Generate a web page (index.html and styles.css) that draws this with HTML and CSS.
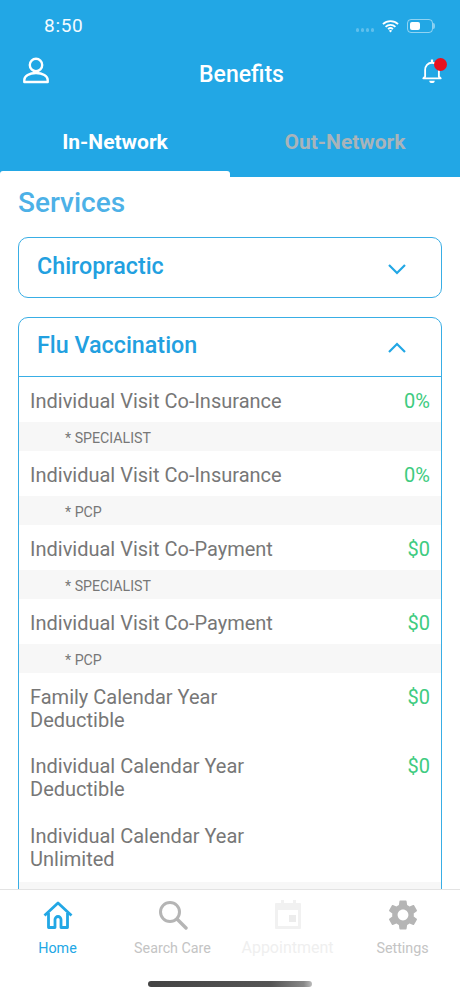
FILE: index.html
```html
<!DOCTYPE html>
<html lang="en">
<head>
<meta charset="utf-8">
<title>Benefits</title>
<link rel="stylesheet" href="styles.css">
</head>
<body>
<div class="app">
  <header class="header">
    <div class="status">
      <span class="time">8:50</span>
      <div class="status-icons">
        <span class="signal"><i></i><i></i><i></i><i></i></span>
        <svg class="wifi" viewBox="0 0 18 14"><path d="M1 5a11.500 11.500 0 0 1 16 0M3.800 7.900a7.500 7.500 0 0 1 10.400 0M6.400 10.400a3.800 3.800 0 0 1 5.200 0" fill="none" stroke="#fff" stroke-width="1.900"/><path d="M9 14l-1.700-2a2.400 2.400 0 0 1 3.400 0z" fill="#fff"/></svg>
        <span class="battery"><span class="battery-fill"></span></span>
      </div>
    </div>
    <div class="nav">
      <svg class="user" viewBox="0 0 28 28"><circle cx="14" cy="8" r="6.200" fill="none" stroke="#fff" stroke-width="2.400"/><path d="M2.300 25v-2c0-4 5-7 11.700-7s11.700 3 11.700 7v2z" fill="none" stroke="#fff" stroke-width="2.400" stroke-linejoin="round"/></svg>
      <h1 class="title">Benefits</h1>
      <span class="bell-wrap">
        <svg class="bell" viewBox="0 0 24 28"><path d="M4.500 20V13c0-4.500 3-8 7.500-8s7.500 3.500 7.500 8v7l2 2H2.500z" fill="none" stroke="#fff" stroke-width="2" stroke-linejoin="round"/><path d="M12 1.500v3" stroke="#fff" stroke-width="2.500"/><path d="M9 24.500a3 2.500 0 0 0 6 0z" fill="#fff"/></svg>
        <span class="badge"></span>
      </span>
    </div>
    <div class="tabs">
      <div class="tab tab-active">In-Network</div>
      <div class="tab tab-muted">Out-Network</div>
    </div>
    <div class="tab-line"></div>
  </header>

  <main class="content">
    <h2 class="services">Services</h2>

    <section class="card card-closed">
      <div class="card-head">
        <span class="card-title">Chiropractic</span>
        <svg class="chev" viewBox="0 0 20 12"><path d="M2 2l8 8 8-8" fill="none" stroke="#22a7e5" stroke-width="2.200"/></svg>
      </div>
    </section>

    <section class="card">
      <div class="card-head card-head-open">
        <span class="card-title">Flu Vaccination</span>
        <svg class="chev" viewBox="0 0 20 12"><path d="M2 10l8-8 8 8" fill="none" stroke="#22a7e5" stroke-width="2.200"/></svg>
      </div>
      <div class="row"><span class="label">Individual Visit Co-Insurance</span><span class="value">0%</span></div>
      <div class="sub">* SPECIALIST</div>
      <div class="row"><span class="label">Individual Visit Co-Insurance</span><span class="value">0%</span></div>
      <div class="sub">* PCP</div>
      <div class="row"><span class="label">Individual Visit Co-Payment</span><span class="value">$0</span></div>
      <div class="sub">* SPECIALIST</div>
      <div class="row"><span class="label">Individual Visit Co-Payment</span><span class="value">$0</span></div>
      <div class="sub">* PCP</div>
      <div class="row row-wrap"><span class="label label-wrap">Family Calendar Year Deductible</span><span class="value">$0</span></div>
      <div class="row row-wrap"><span class="label label-wrap">Individual Calendar Year Deductible</span><span class="value">$0</span></div>
      <div class="row row-wrap"><span class="label label-wrap">Individual Calendar Year Unlimited</span></div>
      <div class="sub"></div>
    </section>
  </main>

  <nav class="tabbar">
    <div class="bar-items">
      <div class="bar-item bar-home">
        <svg class="bar-icon" viewBox="0 0 30 28"><path d="M1.500 14.500L15 2l13.500 12.500M5.500 12v14.500h6.500v-8a3 3 0 0 1 6 0v8h6.500V12" fill="none" stroke="#22a7e5" stroke-width="2.800" stroke-linejoin="round"/></svg>
        <span>Home</span>
      </div>
      <div class="bar-item">
        <svg class="bar-icon" viewBox="0 0 30 30"><circle cx="12" cy="12" r="9.500" fill="none" stroke="#b5b5b5" stroke-width="3"/><path d="M19 19l9 9" stroke="#b5b5b5" stroke-width="3.400" stroke-linecap="round"/></svg>
        <span>Search Care</span>
      </div>
      <div class="bar-item bar-disabled">
        <svg class="bar-icon" viewBox="0 0 30 30"><path d="M3 3h24a1 1 0 0 1 1 1v24a1 1 0 0 1-1 1H3a1 1 0 0 1-1-1V4a1 1 0 0 1 1-1z" fill="#f1f1f1"/><path d="M5 10h20v16H5z" fill="#fff"/><path d="M16 15h7v7h-7z" fill="#ececec"/><path d="M8 0h3v4H8zM20 0h3v4h-3z" fill="#f1f1f1"/></svg>
        <span>Appointment</span>
      </div>
      <div class="bar-item">
        <svg class="bar-icon" viewBox="2 2 20 20"><path fill-rule="evenodd" fill="#b5b5b5" d="M19.140 12.940c.04-.3.06-.61.06-.94 0-.32-.02-.64-.07-.94l2.030-1.580c.18-.14.23-.41.12-.61l-1.920-3.320c-.12-.22-.37-.29-.59-.22l-2.390.96c-.5-.38-1.030-.7-1.620-.94l-.36-2.540c-.04-.24-.24-.41-.48-.41h-3.840c-.24 0-.43.17-.47.41l-.36 2.540c-.59.24-1.130.57-1.620.94l-2.390-.96c-.22-.08-.47 0-.59.22L2.740 8.870c-.12.21-.08.47.12.61l2.030 1.580c-.05.3-.09.63-.09.94s.02.64.07.94l-2.030 1.580c-.18.14-.23.41-.12.61l1.920 3.320c.12.22.37.29.59.22l2.390-.96c.5.38 1.030.7 1.620.94l.36 2.540c.05.24.24.41.48.41h3.840c.24 0 .44-.17.47-.41l.36-2.540c.59-.24 1.130-.56 1.620-.94l2.390.96c.22.08.47 0 .59-.22l1.920-3.320c.12-.22.07-.47-.12-.61l-2.010-1.580zM12 15.600c-1.980 0-3.600-1.620-3.600-3.600s1.620-3.600 3.600-3.600 3.600 1.620 3.600 3.600-1.620 3.600-3.600 3.600z"/></svg>
        <span>Settings</span>
      </div>
    </div>
    <div class="home-indicator"></div>
  </nav>
</div>
</body>
</html>
```
FILE: styles.css
```css
* { box-sizing: border-box; }
html, body { margin: 0; padding: 0; height: 100%; }
body { font-family: Roboto, "Liberation Sans", sans-serif; background: #fff; }
.app { width: 460px; height: 996px; display: flex; flex-direction: column; overflow: hidden; }

.header { background: #22a7e5; height: 177px; flex: none; display: flex; flex-direction: column; color: #fff; }
.status { height: 50px; padding: 14px 27px 0 44px; display: flex; justify-content: space-between; align-items: flex-start; }
.time { font-size: 19px; line-height: 24px; letter-spacing: .7px; color: #f3fbff; }
.status-icons { display: flex; align-items: center; gap: 6px; height: 24px; }
.signal { display: flex; gap: 1.500px; margin-top: 8px; margin-right: 2px; }
.signal i { width: 3.500px; height: 3.500px; border-radius: 50%; background: rgba(255,255,255,.28); }
.wifi { width: 17px; height: 14px; }
.battery { width: 26px; height: 14px; margin-left: 2px; border: 1px solid rgba(255,255,255,.5); border-radius: 4px; padding: 2px; display: block; position: relative; }
.battery::after { content: ""; position: absolute; right: -3px; top: 3px; width: 2px; height: 6px; background: rgba(255,255,255,.45); border-radius: 0 2px 2px 0; }
.battery-fill { display: block; width: 10px; height: 8px; background: #fff; border-radius: 2px; }
.nav { height: 50px; padding: 7px 17px 0 22px; display: flex; justify-content: space-between; align-items: flex-start; }
.user { width: 28px; height: 28px; flex: none; }
.title { margin: -5px 0 0; font-size: 23px; line-height: 46px; font-weight: 500; flex: 1; text-align: center; padding-left: 12px; }
.bell-wrap { position: relative; width: 22px; height: 28px; display: block; margin-top: 1px; flex: none; }
.bell { width: 22px; height: 26px; display: block; }
.badge { position: absolute; top: 0; left: 13px; width: 13px; height: 13px; border-radius: 50%; background: #e8111f; }
.tabs { display: flex; flex: 1; padding-top: 27px; }
.tab { width: 230px; text-align: center; font-size: 21px; font-weight: 700; line-height: 30px; height: 30px; }
.tab-active { color: #fff; }
.tab-muted { color: #a9b4ba; }
.tab-line { width: 230px; height: 6px; background: #fff; border-radius: 3px 3px 0 0; flex: none; }

.content { flex: 1; min-height: 0; overflow: hidden; padding: 0 18px; }
.services { margin: 0; font-size: 28px; font-weight: 500; line-height: 52px; color: #4db1e7; }
.card { border: 1.500px solid #39aee5; border-radius: 10px; margin-top: 8px; overflow: hidden; }
.card-closed { margin-bottom: 19px; }
.card-head { height: 59px; padding: 0 34px 0 18px; display: flex; align-items: center; justify-content: space-between; }
.card-head-open { height: 59px; border-bottom: 1.500px solid #39aee5; }
.card-title { font-size: 23.300px; font-weight: 500; color: #22a0e0; margin-bottom: 4px; }
.chev { width: 20px; height: 12px; margin-top: 2px; }
.row { display: flex; justify-content: space-between; align-items: flex-start; padding: 12.500px 11px 9.500px; font-size: 20px; line-height: 23px; color: #777; }
.row-wrap { padding-bottom: 11px; }
.label-wrap { width: 240px; }
.value { color: #3ecb80; }
.sub { height: 29px; background: #f7f7f7; padding: 2px 0 0 46px; font-size: 14.200px; line-height: 29px; color: #777; }

.tabbar { height: 107px; flex: none; border-top: 1px solid #e3e3e3; background: #fff; display: flex; flex-direction: column; align-items: center; }
.bar-items { display: grid; grid-template-columns: repeat(4, 115px); width: 460px; padding-top: 10px; }
.bar-item { display: flex; flex-direction: column; align-items: center; font-size: 14.300px; line-height: 20px; color: #c4c4c4; }
.bar-icon { width: 30px; height: 30px; margin-bottom: 8px; }
.bar-home { color: #22a7e5; }
.bar-disabled { color: #efefef; font-size: 16px; }
.home-indicator { width: 164px; height: 6px; background: linear-gradient(90deg, #444 0%, #555 75%, #888 95%, #bbb 100%); border-radius: 3px; margin-top: 23px; }
```
